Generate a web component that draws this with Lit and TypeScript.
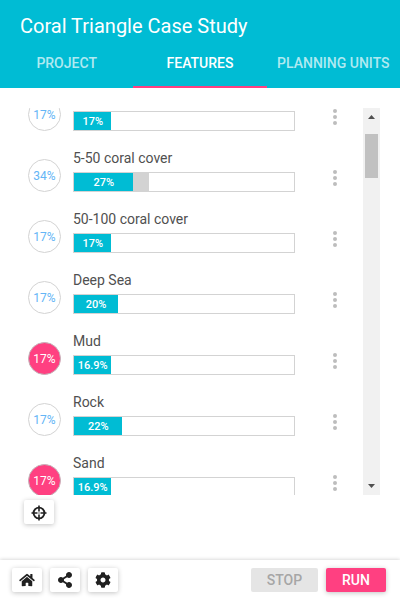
import { LitElement, html, css, svg } from "lit";
import { customElement, property, state, query } from "lit/decorators.js";
import { classMap } from "lit/directives/class-map.js";
import { styleMap } from "lit/directives/style-map.js";

interface Feature {
  name: string;
  target: number;
  protectedShare: number;
  label: string;
  missed?: boolean;
}

const FEATURES: Feature[] = [
  { name: "", target: 17, protectedShare: 17, label: "17%" },
  { name: "5-50 coral cover", target: 34, protectedShare: 27, label: "27%" },
  { name: "50-100 coral cover", target: 17, protectedShare: 17, label: "17%" },
  { name: "Deep Sea", target: 17, protectedShare: 20, label: "20%" },
  { name: "Mud", target: 17, protectedShare: 16.9, label: "16.9%", missed: true },
  { name: "Rock", target: 17, protectedShare: 22, label: "22%" },
  { name: "Sand", target: 17, protectedShare: 16.9, label: "16.9%", missed: true },
];

const TABS = ["PROJECT", "FEATURES", "PLANNING UNITS"];

const homeIcon = svg`<path d="M280.37 148.26L96 300.11V464a16 16 0 0 0 16 16l112.06-.29a16 16 0 0 0 15.92-16V368a16 16 0 0 1 16-16h64a16 16 0 0 1 16 16v95.64a16 16 0 0 0 16 16.05L464 480a16 16 0 0 0 16-16V300L295.67 148.26a12.19 12.19 0 0 0-15.3 0zM571.6 251.47L488 182.56V44.05a12 12 0 0 0-12-12h-56a12 12 0 0 0-12 12v72.61L318.47 43a48 48 0 0 0-61 0L4.34 251.47a12 12 0 0 0-1.6 16.9l25.5 31A12 12 0 0 0 45.15 301l235.22-193.74a12.19 12.19 0 0 1 15.3 0L530.9 301a12 12 0 0 0 16.9-1.6l25.5-31a12 12 0 0 0-1.7-16.93z"/>`;
const shareIcon = svg`<path d="M352 320c-22.608 0-43.387 7.819-59.79 20.895l-102.486-64.054a96.551 96.551 0 0 0 0-41.683l102.486-64.054C308.613 184.181 329.392 192 352 192c53.019 0 96-42.981 96-96S405.019 0 352 0s-96 42.981-96 96c0 7.158.79 14.13 2.276 20.841L155.79 180.895C139.387 167.819 118.608 160 96 160c-53.019 0-96 42.981-96 96s42.981 96 96 96c22.608 0 43.387-7.819 59.79-20.895l102.486 64.054A96.301 96.301 0 0 0 256 416c0 53.019 42.981 96 96 96s96-42.981 96-96-42.981-96-96-96z"/>`;
const cogIcon = svg`<path d="M487.4 315.7l-42.6-24.6c4.3-23.2 4.3-47 0-70.2l42.6-24.6c4.9-2.8 7.1-8.6 5.5-14-11.1-35.6-30-67.8-54.7-94.6-3.8-4.1-10-5.1-14.8-2.3L380.8 110c-17.9-15.4-38.5-27.3-60.8-35.1V25.8c0-5.6-3.9-10.5-9.4-11.7-36.7-8.2-74.3-7.8-109.2 0-5.5 1.2-9.4 6.1-9.4 11.7V75c-22.2 7.9-42.8 19.8-60.8 35.1L88.7 85.5c-4.9-2.8-11-1.9-14.8 2.3-24.7 26.7-43.6 58.9-54.7 94.6-1.7 5.4.6 11.2 5.5 14L67.3 221c-4.3 23.2-4.3 47 0 70.2l-42.6 24.6c-4.9 2.8-7.1 8.6-5.5 14 11.1 35.6 30 67.8 54.7 94.6 3.8 4.1 10 5.1 14.8 2.3l42.6-24.6c17.9 15.4 38.5 27.3 60.8 35.1v49.2c0 5.6 3.9 10.5 9.4 11.7 36.7 8.2 74.3 7.8 109.2 0 5.5-1.2 9.4-6.1 9.4-11.7v-49.2c22.2-7.9 42.8-19.8 60.8-35.1l42.6 24.6c4.9 2.8 11 1.9 14.8-2.3 24.7-26.7 43.6-58.9 54.7-94.6 1.5-5.5-.7-11.3-5.6-14.1zM256 336c-44.1 0-80-35.9-80-80s35.9-80 80-80 80 35.9 80 80-35.9 80-80 80z"/>`;

@customElement("feature-row")
class FeatureRow extends LitElement {
  @property({ attribute: false }) feature!: Feature;

  static styles = css`
    :host {
      display: flex;
      height: 61px;
      padding: 0 4px 0 8px;
      box-sizing: border-box;
    }
    .target {
      flex: none;
      box-sizing: border-box;
      width: 33px;
      height: 33px;
      margin: 15px 12px 0 0;
      border: 1px solid #d3d3d3;
      border-radius: 50%;
      font-size: 12px;
      line-height: 32px;
      text-align: center;
      color: #64b5f6;
    }
    .missed {
      background: #ff4081;
      border-color: #c2b4b9;
      color: #fff;
    }
    .body {
      flex: 1;
      min-width: 0;
    }
    .name {
      height: 28px;
      font-size: 14px;
      line-height: 28px;
      font-weight: 400;
      color: #505050;
      white-space: nowrap;
    }
    .bar {
      display: grid;
      height: 18px;
      border: 1px solid #d3d3d3;
    }
    .goal,
    .reached {
      grid-area: 1 / 1;
      height: 18px;
    }
    .goal {
      background: #d3d3d3;
    }
    .reached {
      background: #00bcd4;
      color: #fff;
      font-size: 11px;
      font-weight: 500;
      line-height: 19px;
      text-align: center;
    }
    .more {
      flex: none;
      width: 48px;
      height: 48px;
      margin: 10px 0 0 16px;
      padding: 12px;
      border: 0;
      background: none;
    }
    .more svg {
      display: block;
      fill: #bdbdbd;
    }
  `;

  render() {
    const f = this.feature;
    return html`
      <div class=${classMap({ target: true, missed: !!f.missed })}>${f.target}%</div>
      <div class="body">
        <div class="name">${f.name}</div>
        <div class="bar">
          <div class="goal" style=${styleMap({ width: `${f.target}%` })}></div>
          <div class="reached" style=${styleMap({ width: `${f.protectedShare}%` })}>${f.label}</div>
        </div>
      </div>
      <button class="more" aria-label="Options">
        <svg width="24" height="24" viewBox="0 0 24 24">
          <circle cx="12" cy="6" r="2" /><circle cx="12" cy="12" r="2" /><circle cx="12" cy="18" r="2" />
        </svg>
      </button>
    `;
  }
}

@customElement("app-root")
class AppRoot extends LitElement {
  @state() private tab = 1;
  @query(".rows") private rows!: HTMLElement;

  static styles = css`
    :host {
      display: flex;
      flex-direction: column;
      height: 100vh;
      background: #fff;
      font-family: Roboto, sans-serif;
      color: #212121;
    }
    button {
      font-family: inherit;
      cursor: pointer;
    }
    .header {
      background: #00bcd4;
    }
    .title {
      margin: 0;
      padding: 12px 20px 0;
      font-size: 20px;
      line-height: 28px;
      font-weight: 400;
      color: #fff;
    }
    .tabs {
      display: grid;
      grid-template-columns: repeat(3, minmax(0, 1fr));
    }
    .tab {
      height: 48px;
      padding: 0;
      border: 0;
      border-bottom: 2px solid transparent;
      background: none;
      font-size: 14px;
      font-weight: 500;
      white-space: nowrap;
      color: rgba(255, 255, 255, 0.7);
    }
    .selected {
      color: #fff;
      border-bottom-color: #ff4081;
    }
    .main {
      flex: 1;
      min-height: 0;
      display: flex;
      flex-direction: column;
      padding: 20px 20px 36px;
    }
    .list {
      flex: 1;
      min-height: 0;
      display: flex;
    }
    .rows {
      flex: 1;
      overflow-y: auto;
      scrollbar-width: none;
    }
    .track {
      display: flex;
      flex-direction: column;
      align-items: center;
      width: 17px;
      background: #f1f1f1;
    }
    .arrow {
      width: 17px;
      height: 17px;
      padding: 0;
      border: 0;
      background: none;
    }
    .arrow svg {
      display: block;
      fill: #505050;
    }
    .thumb {
      width: 13px;
      height: 44px;
      margin: 9px 0 auto;
      background: #c1c1c1;
    }
    .tools {
      padding: 5px 4px 0;
    }
    .footer {
      display: flex;
      gap: 8px;
      padding: 8px 14px 9px 12px;
      box-shadow: 0 0 4px rgba(0, 0, 0, 0.22);
    }
    .icon,
    .action {
      height: 24px;
      padding: 0;
      border: 0;
      border-radius: 2px;
      box-shadow: 0 1px 5px rgba(0, 0, 0, 0.24);
    }
    .icon {
      display: flex;
      align-items: center;
      justify-content: center;
      width: 30px;
      background: #fff;
    }
    .icon svg {
      display: block;
      fill: #212121;
    }
    .tools .icon {
      padding-top: 2px;
    }
    .action {
      width: 60px;
      font-size: 14px;
      font-weight: 500;
      background: #ff4081;
      color: #fff;
    }
    .stop {
      width: 67px;
      margin-left: auto;
      background: #e5e5e5;
      color: #a6a6a6;
      box-shadow: none;
    }
  `;

  firstUpdated() {
    this.rows.scrollTop = 25;
  }

  private scrollRows(step: number) {
    this.rows.scrollTop += step;
  }

  render() {
    return html`
      <header class="header">
        <h1 class="title">Coral Triangle Case Study</h1>
        <div class="tabs" role="tablist">
          ${TABS.map(
            (name, i) => html`<button
              role="tab"
              aria-selected=${i === this.tab}
              class=${classMap({ tab: true, selected: i === this.tab })}
              @click=${() => (this.tab = i)}
            >${name}</button>`,
          )}
        </div>
      </header>
      <main class="main">
        <div class="list">
          <div class="rows">
            ${FEATURES.map((f) => html`<feature-row .feature=${f}></feature-row>`)}
          </div>
          <div class="track">
            <button class="arrow" aria-label="Scroll up" @click=${() => this.scrollRows(-40)}>
              <svg width="17" height="17" viewBox="0 0 17 17"><path d="M5 11L8.5 7L12 11z" /></svg>
            </button>
            <div class="thumb"></div>
            <button class="arrow" aria-label="Scroll down" @click=${() => this.scrollRows(40)}>
              <svg width="17" height="17" viewBox="0 0 17 17"><path d="M5 6L8.5 10L12 6z" /></svg>
            </button>
          </div>
        </div>
        <div class="tools">
          <button class="icon" aria-label="Select features">
            <svg width="16" height="16" viewBox="0 0 16 16">
              <circle cx="8" cy="8" r="5.4" fill="none" stroke="#212121" stroke-width="1.9" />
              <path d="M7.200 .5h1.600v6H7.200zM7.200 9.500h1.600v6H7.200zM.5 7.200h6v1.600H.5zM9.500 7.200h6v1.600H9.500z" />
              <circle cx="8" cy="8" r="1" opacity=".4" />
            </svg>
          </button>
        </div>
      </main>
      <footer class="footer">
        <button class="icon" aria-label="Home">
          <svg width="16" height="14" viewBox="0 0 576 512">${homeIcon}</svg>
        </button>
        <button class="icon" aria-label="Share">
          <svg width="14" height="16" viewBox="0 0 448 512">${shareIcon}</svg>
        </button>
        <button class="icon" aria-label="Settings">
          <svg width="16" height="16" viewBox="0 0 512 512">${cogIcon}</svg>
        </button>
        <button class="action stop" disabled>STOP</button>
        <button class="action">RUN</button>
      </footer>
    `;
  }
}
